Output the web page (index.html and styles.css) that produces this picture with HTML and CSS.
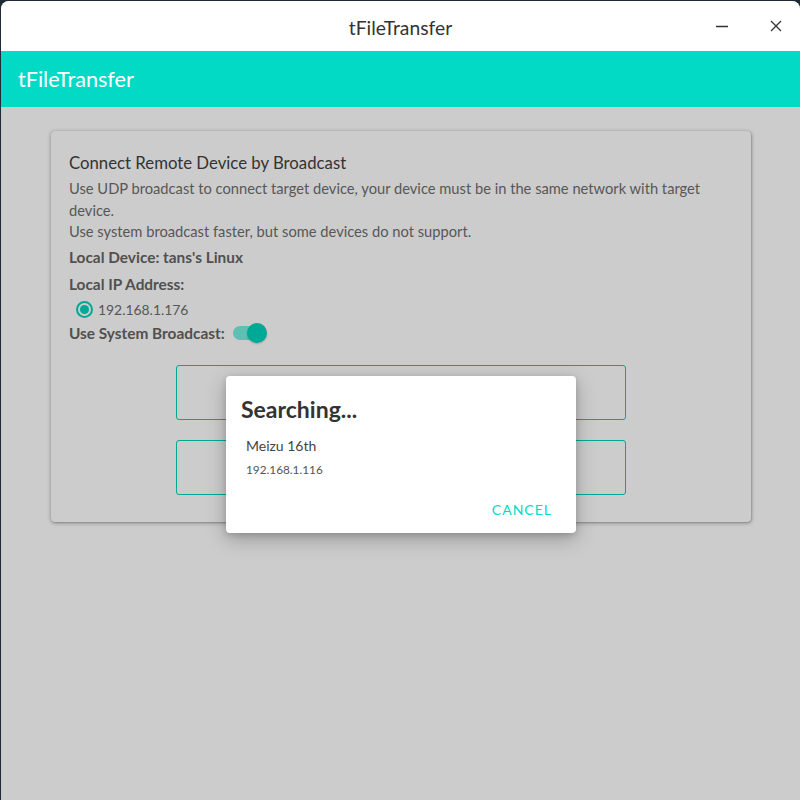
FILE: index.html
```html
<!DOCTYPE html>
<html>
<head>
<meta charset="utf-8">
<link rel="stylesheet" href="styles.css">
</head>
<body>
<div class="window">
  <div class="titlebar">
    <span class="wtitle">tFileTransfer</span>
    <div class="wcontrols">
      <svg class="wbtn" width="14" height="14" viewBox="0 0 14 14"><path d="M1 7.5H13" stroke="#333" stroke-width="1.4"/></svg>
      <svg class="wbtn" width="14" height="14" viewBox="0 0 14 14"><path d="M2 2L12 12M12 2L2 12" stroke="#333" stroke-width="1.3"/></svg>
    </div>
  </div>
  <div class="appbar">tFileTransfer</div>
  <div class="content">
    <div class="card">
      <div class="card-title">Connect Remote Device by Broadcast</div>
      <div class="desc">Use UDP broadcast to connect target device, your device must be in the same network with target device.<br>Use system broadcast faster, but some devices do not support.</div>
      <div class="label first">Local Device: tans's Linux</div>
      <div class="label">Local IP Address:</div>
      <div class="radio-row"><span class="radio"><span class="dot"></span></span><span class="ip">192.168.1.176</span></div>
      <div class="toggle-row"><span class="label inline">Use System Broadcast:</span><span class="toggle"><span class="track"></span><span class="thumb"></span></span></div>
      <div class="btn"></div>
      <div class="btn"></div>
    </div>
  </div>
  <div class="dialog">
    <div class="dlg-title">Searching...</div>
    <div class="item">
      <div class="item-name">Meizu 16th</div>
      <div class="item-ip">192.168.1.116</div>
    </div>
    <div class="dlg-actions"><span class="cancel">CANCEL</span></div>
  </div>
</div>
</body>
</html>
```
FILE: styles.css
```css
* { box-sizing: border-box; }
html, body { margin: 0; padding: 0; }
body {
  background: #1e2a36;
  width: 800px;
  height: 800px;
  overflow: hidden;
  font-family: "Lato", "Open Sans", sans-serif;
}
.window {
  position: relative;
  margin-left: 1px;
  margin-top: 1px;
  width: 799px;
  height: 799px;
  border-radius: 8px 8px 0 0;
  overflow: hidden;
  background: #cccccc;
  display: flex;
  flex-direction: column;
}
.titlebar {
  height: 50px;
  background: #ffffff;
  display: flex;
  align-items: center;
  justify-content: center;
  position: relative;
  flex-shrink: 0;
}
.wtitle {
  font-size: 19.3px;
  color: #333;
  margin-top: 2px;
}
.wcontrols {
  position: absolute;
  right: 17px;
  top: 18px;
  display: flex;
  gap: 40px;
}
.appbar {
  height: 56px;
  background: #03dac6;
  color: #fff;
  font-size: 21.6px;
  padding-left: 17px;
  line-height: 56px;
  flex-shrink: 0;
}
.content {
  flex: 1;
  padding: 24px 49px 0 50px;
}
.card {
  background: #cccccc;
  border-radius: 4px;
  box-shadow: 0 1px 4px rgba(0,0,0,0.3), 1px 1px 2px rgba(0,0,0,0.12), 0 0 1px rgba(0,0,0,0.2);
  padding: 20px 18px 27px 18px;
  display: flex;
  flex-direction: column;
}
.card-title {
  font-size: 16.75px;
  line-height: 24px;
  color: #333;
  margin-bottom: 3px;
}
.desc {
  font-size: 14.7px;
  line-height: 21.5px;
  color: #575757;
}
.label {
  font-size: 15.4px;
  font-weight: bold;
  line-height: 22px;
  color: #505050;
  margin-top: 5px;
}
.label.first { margin-top: 3.5px; }
.label.inline { margin-top: 0; }
.radio-row {
  display: flex;
  align-items: center;
  height: 24px;
  margin-top: 2px;
  padding-left: 7px;
}
.radio {
  width: 17px;
  height: 17px;
  border: 2px solid #00a896;
  border-radius: 50%;
  display: flex;
  align-items: center;
  justify-content: center;
  margin-right: 5px;
}
.dot {
  width: 9px;
  height: 9px;
  border-radius: 50%;
  background: #00a896;
}
.ip {
  font-size: 13.9px;
  color: #575757;
}
.toggle-row {
  display: flex;
  align-items: center;
  height: 24px;
  gap: 8px;
}
.toggle {
  position: relative;
  width: 34px;
  height: 20px;
  display: block;
}
.track {
  position: absolute;
  left: 0;
  top: 3px;
  width: 30px;
  height: 14px;
  border-radius: 7px;
  background: #5ebfb2;
}
.thumb {
  position: absolute;
  left: 14px;
  top: 0;
  width: 20px;
  height: 20px;
  border-radius: 50%;
  background: #00a896;
  box-shadow: 0 1px 2px rgba(0,0,0,0.2);
}
.btn {
  width: 450px;
  height: 55px;
  align-self: center;
  border: 1px solid #00a896;
  border-radius: 3px;
  margin-top: 20px;
}
.dialog {
  position: absolute;
  left: 225px;
  top: 375px;
  width: 350px;
  height: 157px;
  background: #fff;
  border-radius: 4px;
  box-shadow: 0 6px 20px rgba(0,0,0,0.25), 0 2px 6px rgba(0,0,0,0.15);
  padding: 19px 24px 0 15px;
  display: flex;
  flex-direction: column;
}
.dlg-title {
  font-size: 23px;
  font-weight: bold;
  line-height: 28px;
  color: #333;
}
.item {
  padding-left: 5px;
  margin-top: 13px;
}
.item-name {
  font-size: 14px;
  line-height: 20px;
  color: #444;
}
.item-ip {
  font-size: 11.8px;
  line-height: 18px;
  color: #555;
  margin-top: 5px;
}
.dlg-actions {
  display: flex;
  justify-content: flex-end;
  margin-top: 21px;
}
.cancel {
  font-size: 14px;
  letter-spacing: 1px;
  color: #03dac6;
  line-height: 20px;
}
```
